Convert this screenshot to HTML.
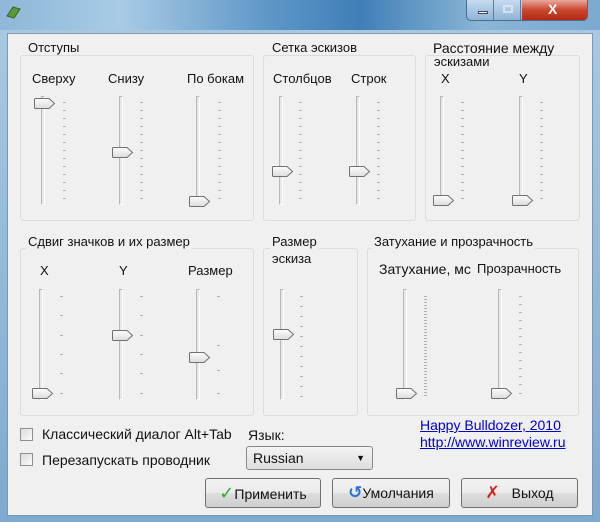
<!DOCTYPE html>
<html><head><meta charset="utf-8"><style>
*{margin:0;padding:0;box-sizing:border-box}
body{width:600px;height:522px;overflow:hidden;background:#6a9cc6;font-family:"Liberation Sans","DejaVu Sans",sans-serif;font-size:13px;color:#111;position:relative}
.title{position:absolute;left:0;top:0;width:600px;height:34px;background:linear-gradient(90deg,#8db8d8 0%,#a9cbe5 20%,#5d97c7 45%,#3f7fb7 60%,#8ab5d6 80%,#7ca9cf 100%)}
.frame{position:absolute;left:0;top:30px;width:600px;height:492px;background:linear-gradient(180deg,#a8c8e2,#7eaad0)}
.body{position:absolute;left:7px;top:33px;width:586px;height:483px;background:#f0f0f0;border:1px solid #7a98b4}
.a{position:absolute;white-space:nowrap}
.g{position:absolute;border:1px solid #dcdcdc;border-radius:3px}
.gt{position:absolute;background:#f0f0f0;padding:0 2px;white-space:nowrap;line-height:14px}
.tr{position:absolute;width:4px;border:1px solid #b8b8b8;border-right-color:#fff;border-bottom-color:#fff;background:#e8e8e8}
.tk{position:absolute;width:3px;height:1px;background:#b0b0b0}
.btn{position:absolute;height:30px;border:1px solid #707070;border-radius:3px;background:linear-gradient(#f2f2f2 0%,#ebebeb 50%,#dddddd 51%,#cfcfcf 100%);text-align:center;line-height:28px;font-size:14px}
.cb{position:absolute;width:13px;height:13px;border:1px solid #8e8f8f;background:linear-gradient(135deg,#dcdcdc,#fbfbfb)}
.l{font-size:14px}
a{color:#0000cc;text-decoration:underline}
</style></head><body>
<div class="title"></div>
<div class="frame"></div>
<svg class="a" style="left:5px;top:4px" width="18" height="16"><path d="M2 12 L8 3 L15 5 L9 14Z" fill="#5a9a3a" stroke="#2f6a1f"/></svg>
<div class="a" style="left:466px;top:0;width:122px;height:21px;border:1px solid #4a6a8a;border-top:none;border-radius:0 0 5px 5px;overflow:hidden;background:linear-gradient(#c6dbef,#8fb4d8)">
 <div class="a" style="left:0;top:0;width:27px;height:20px;border-right:1px solid #5d7a98"></div>
 <div class="a" style="left:11px;top:11px;width:10px;height:3px;background:#fff;border:1px solid #445"></div>
 <div class="a" style="left:28px;top:0;width:26px;height:20px;border-right:1px solid #5d7a98"></div>
 <div class="a" style="left:36px;top:5px;width:10px;height:8px;border:2px solid #e8eef4;opacity:.7"></div>
 <div class="a" style="left:55px;top:0;width:67px;height:20px;background:linear-gradient(#e9a89a,#c9452f 50%,#b32a14)"></div>
 <div class="a" style="left:81px;top:1px;color:#fff;font-weight:bold;font-size:14px">X</div>
</div>
<div class="body"></div>

<div class="g" style="left:20px;top:55px;width:234px;height:166px"></div><div class="gt" style="left:26px;top:41px">Отступы</div>
<div class="g" style="left:263px;top:55px;width:153px;height:166px"></div><div class="gt" style="left:270px;top:41px">Сетка эскизов</div>
<div class="g" style="left:425px;top:55px;width:155px;height:166px"></div><div class="gt l" style="left:431px;top:41px">Расстояние между</div><div class="a" style="left:434px;top:55px;line-height:14px">эскизами</div>
<div class="g" style="left:20px;top:248px;width:234px;height:168px"></div><div class="gt" style="left:26px;top:235px">Сдвиг значков и их размер</div>
<div class="g" style="left:263px;top:248px;width:95px;height:168px"></div><div class="gt" style="left:270px;top:235px">Размер</div><div class="a" style="left:272px;top:252px;line-height:14px">эскиза</div>
<div class="g" style="left:367px;top:248px;width:212px;height:168px"></div><div class="gt" style="left:372px;top:235px">Затухание и прозрачность</div>

<div class="a" style="left:32px;top:71px">Сверху</div>
<div class="a" style="left:108px;top:71px">Снизу</div>
<div class="a" style="left:187px;top:71px">По бокам</div>
<div class="a" style="left:273px;top:71px">Столбцов</div>
<div class="a" style="left:351px;top:71px">Строк</div>
<div class="a" style="left:441px;top:71px">X</div>
<div class="a" style="left:519px;top:71px">Y</div>
<div class="a" style="left:40px;top:263px">X</div>
<div class="a" style="left:119px;top:263px">Y</div>
<div class="a" style="left:188px;top:263px">Размер</div>
<div class="a l" style="left:379px;top:261px">Затухание, мс</div>
<div class="a" style="left:477px;top:261px">Прозрачность</div>

<div id="s"></div>
<script>
var S=[[43,96,205,103,63,[102,110,118,126,134,142,150,158,166,174,182,190,198]],
[121,96,205,152,140,[102,110,118,126,134,142,150,158,166,174,182,190,198]],
[198,96,205,201,218,[102,110,118,126,134,142,150,158,166,174,182,190,198]],
[281,96,205,171,299,[102,110,118,126,134,142,150,158,166,174,182,190,198]],
[358,96,205,171,377,[102,110,118,126,134,142,150,158,166,174,182,190,198]],
[442,96,205,200,461,[102,110,118,126,134,142,150,158,166,174,182,190,198]],
[521,96,205,200,540,[102,110,118,126,134,142,150,158,166,174,182,190,198]],
[41,289,400,393,60,[296,315,335,354,373,393]],
[121,289,400,335,140,[296,315,335,354,373,393]],
[198,289,400,357,217,[296,345,370,393]],
[282,289,400,334,300,[296,306,316,326,336,346,356,366,376,386,396]],
[405,289,400,393,424,[296,299,302,305,308,311,314,317,320,323,326,329,332,335,338,341,344,347,350,353,356,359,362,365,368,371,374,377,380,383,386,389,392,395]],
[500,289,400,393,519,[296,304,312,320,328,336,344,352,360,368,376,384,393]]];
var h='';
S.forEach(function(s){
h+='<div class="tr" style="left:'+(s[0]-2)+'px;top:'+s[1]+'px;height:'+(s[2]-s[1])+'px"></div>';
s[5].forEach(function(y){h+='<div class="tk" style="left:'+s[4]+'px;top:'+y+'px"></div>'});
h+='<svg class="a" style="left:'+(s[0]-10)+'px;top:'+(s[3]-6)+'px" width="24" height="13"><defs><linearGradient id="gg" x1="0" y1="0" x2="0" y2="1"><stop offset="0" stop-color="#fdfdfd"/><stop offset="1" stop-color="#dcdcdc"/></linearGradient></defs><path d="M1.5 2.5 Q1.5 1.5 2.5 1.5 H16 L21.5 6.5 L16 11.5 H2.5 Q1.5 11.5 1.5 10.5Z" fill="url(#gg)" stroke="#707070"/></svg>';
});
document.getElementById('s').innerHTML=h;
</script>

<div class="cb" style="left:20px;top:428px"></div><div class="a l" style="left:42px;top:426px">Классический диалог Alt+Tab</div>
<div class="cb" style="left:20px;top:453px"></div><div class="a l" style="left:42px;top:452px">Перезапускать проводник</div>
<div class="a l" style="left:248px;top:427px">Язык:</div>
<div class="a l" style="left:246px;top:446px;width:127px;height:24px;border:1px solid #8a8a8a;border-radius:3px;background:linear-gradient(#f4f4f4,#dedede);line-height:22px;padding-left:6px">Russian<span style="position:absolute;right:7px;top:0;font-size:9px">▼</span></div>
<div class="a l" style="left:420px;top:417px"><a>Happy Bulldozer, 2010</a></div>
<div class="a l" style="left:420px;top:434px"><a>http://www.winreview.ru</a></div>

<div class="btn" style="left:205px;top:478px;width:116px"><span style="color:#3aa63a;font-size:18px;font-weight:bold">✓</span>Применить</div>
<div class="btn" style="left:332px;top:478px;width:118px"><span style="color:#2d6fd0;font-size:17px;font-weight:bold">↺</span>Умолчания</div>
<div class="btn" style="left:461px;top:478px;width:117px"><span style="color:#d02020;font-size:17px;font-weight:bold;margin-right:12px">✗</span>Выход</div>
</body></html>
